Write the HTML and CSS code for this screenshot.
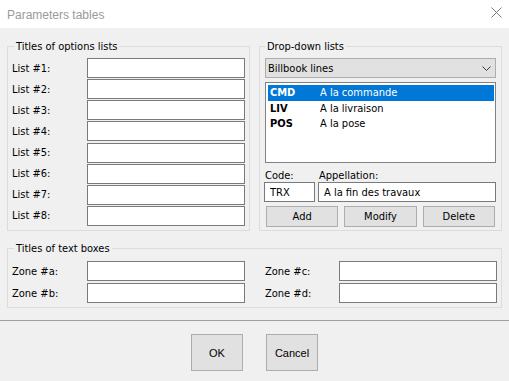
FILE: index.html
```html
<!DOCTYPE html>
<html lang="en">
<head>
<meta charset="utf-8">
<title>Parameters tables</title>
<link rel="stylesheet" href="styles.css">
</head>
<body>
<div class="window">
  <div class="titlebar">
    <span class="title">Parameters tables</span>
    <svg class="close" width="11" height="11" viewBox="0 0 11 11"><path d="M0.5 0.5 L10.5 10.5 M10.5 0.5 L0.5 10.5" stroke="#7a7a7a" stroke-width="1" fill="none"/></svg>
  </div>
  <div class="content">
    <div class="top-row">
      <fieldset class="group group-left">
        <legend>Titles of options lists</legend>
        <div class="field-grid">
          <label>List #1:</label><input class="edit" type="text">
          <label>List #2:</label><input class="edit" type="text">
          <label>List #3:</label><input class="edit" type="text">
          <label>List #4:</label><input class="edit" type="text">
          <label>List #5:</label><input class="edit" type="text">
          <label>List #6:</label><input class="edit" type="text">
          <label>List #7:</label><input class="edit" type="text">
          <label>List #8:</label><input class="edit" type="text">
        </div>
      </fieldset>
      <fieldset class="group group-right">
        <legend>Drop-down lists</legend>
        <div class="select">
          <span>Billbook lines</span>
          <svg class="chevron" width="9" height="5" viewBox="0 0 9 5"><path d="M0.5 0.5 L4.5 4.5 L8.5 0.5" stroke="#3c3c3c" stroke-width="1" fill="none"/></svg>
        </div>
        <div class="listbox">
          <div class="item selected"><span class="code">CMD</span><span>A la commande</span></div>
          <div class="item"><span class="code">LIV</span><span>A la livraison</span></div>
          <div class="item"><span class="code">POS</span><span>A la pose</span></div>
        </div>
        <div class="edit-row">
          <div class="col col-code">
            <label>Code:</label>
            <input class="edit" type="text" value="TRX">
          </div>
          <div class="col col-app">
            <label>Appellation:</label>
            <input class="edit" type="text" value="A la fin des travaux">
          </div>
        </div>
        <div class="action-row">
          <button class="btn">Add</button>
          <button class="btn">Modify</button>
          <button class="btn">Delete</button>
        </div>
      </fieldset>
    </div>
    <fieldset class="group group-bottom">
      <legend>Titles of text boxes</legend>
      <div class="zone-grid">
        <label>Zone #a:</label><input class="edit" type="text">
        <label class="second">Zone #c:</label><input class="edit" type="text">
        <label>Zone #b:</label><input class="edit" type="text">
        <label class="second">Zone #d:</label><input class="edit" type="text">
      </div>
    </fieldset>
  </div>
  <div class="separator"></div>
  <div class="footer">
    <button class="btn big">OK</button>
    <button class="btn big">Cancel</button>
  </div>
</div>
</body>
</html>
```

FILE: styles.css
```css
html, body {
  margin: 0;
  padding: 0;
  background: #f0f0f0;
}
body {
  font-family: "DejaVu Sans Condensed", "DejaVu Sans", sans-serif;
  font-stretch: condensed;
  font-size: 11px;
  color: #000;
  width: 509px;
  height: 381px;
  overflow: hidden;
}
.window {
  width: 509px;
  height: 381px;
  background: #f0f0f0;
}
.titlebar {
  height: 28px;
  background: #fff;
  display: flex;
  align-items: center;
  justify-content: space-between;
  padding: 0 7px 0 7px;
  box-sizing: border-box;
}
.title {
  font-family: "Liberation Sans", Arial, sans-serif;
  font-stretch: normal;
  font-size: 12px;
  color: #9a9a9a;
  padding-top: 1px;
}
.close {
  display: block;
  margin-top: -3px;
}
.content {
  padding: 12px 7px 12px 7px;
}
.top-row {
  display: flex;
  gap: 9px;
}
.group {
  margin: 0;
  min-width: 0;
  border: 1px solid #dcdcdc;
  box-sizing: border-box;
}
.group legend {
  line-height: 13px;
  padding: 0 2px;
  margin-left: 2px;
}
.group-left {
  width: 243px;
  padding: 5px 4px 4px 4px;
}
.group-right {
  width: 243px;
  padding: 5px 5px 3px 5px;
}
.group-right legend {
  margin-left: 0;
}
.group-bottom {
  width: 495px;
  margin-top: 11px;
  padding: 6px 4px 4px 4px;
}
.field-grid {
  display: grid;
  grid-template-columns: 75px 158px;
  row-gap: 1.15px;
  align-items: center;
}
.edit {
  box-sizing: border-box;
  height: 20px;
  width: 100%;
  margin: 0;
  border: 1px solid #7a7a7a;
  background: #fff;
  padding: 0 0 0 5px;
  font: inherit;
  color: #000;
  outline: none;
}
label {
  line-height: 13px;
}
.select {
  box-sizing: border-box;
  height: 20px;
  border: 1px solid #adadad;
  background: #e1e1e1;
  display: flex;
  align-items: center;
  justify-content: space-between;
  padding: 0 4px 0 2px;
}
.chevron {
  display: block;
}
.listbox {
  box-sizing: border-box;
  height: 81px;
  margin-top: 4px;
  border: 1px solid #828282;
  background: #fff;
  padding: 1px 1px 1px 1px;
}
.item {
  display: grid;
  grid-template-columns: 50px 1fr;
  height: 15.5px;
  line-height: 15.5px;
  padding-left: 2px;
  margin-left: 1px;
}
.item:first-child {
  margin-top: 1px;
}
.item .code {
  font-weight: bold;
}
.item.selected {
  background: #0078d7;
  color: #fff;
}
.edit-row {
  display: flex;
  gap: 3px;
  margin-top: 6px;
  margin-left: -1px;
}
.col {
  display: flex;
  flex-direction: column;
}
.col label {
  padding-left: 1px;
}
.col-code {
  width: 51px;
}
.col-app {
  width: 178px;
}
.action-row {
  display: flex;
  gap: 6px;
  margin-top: 4px;
  padding: 0 1px;
}
.btn {
  box-sizing: border-box;
  flex: 1;
  height: 21px;
  margin: 0;
  padding: 0;
  border: 1px solid #adadad;
  background: #e1e1e1;
  font: inherit;
  color: #000;
}
.zone-grid {
  display: grid;
  grid-template-columns: 75px 158px 94px 158px;
  row-gap: 2px;
  align-items: center;
}
.zone-grid .second {
  padding-left: 20px;
}
.separator {
  height: 1px;
  background: #a0a0a0;
}
.footer {
  display: flex;
  justify-content: center;
  gap: 23px;
  padding-top: 13px;
}
.btn.big {
  flex: none;
  width: 52px;
  height: 37px;
  font-family: "Liberation Sans", Arial, sans-serif;
  font-stretch: normal;
  font-size: 11px;
}
```
